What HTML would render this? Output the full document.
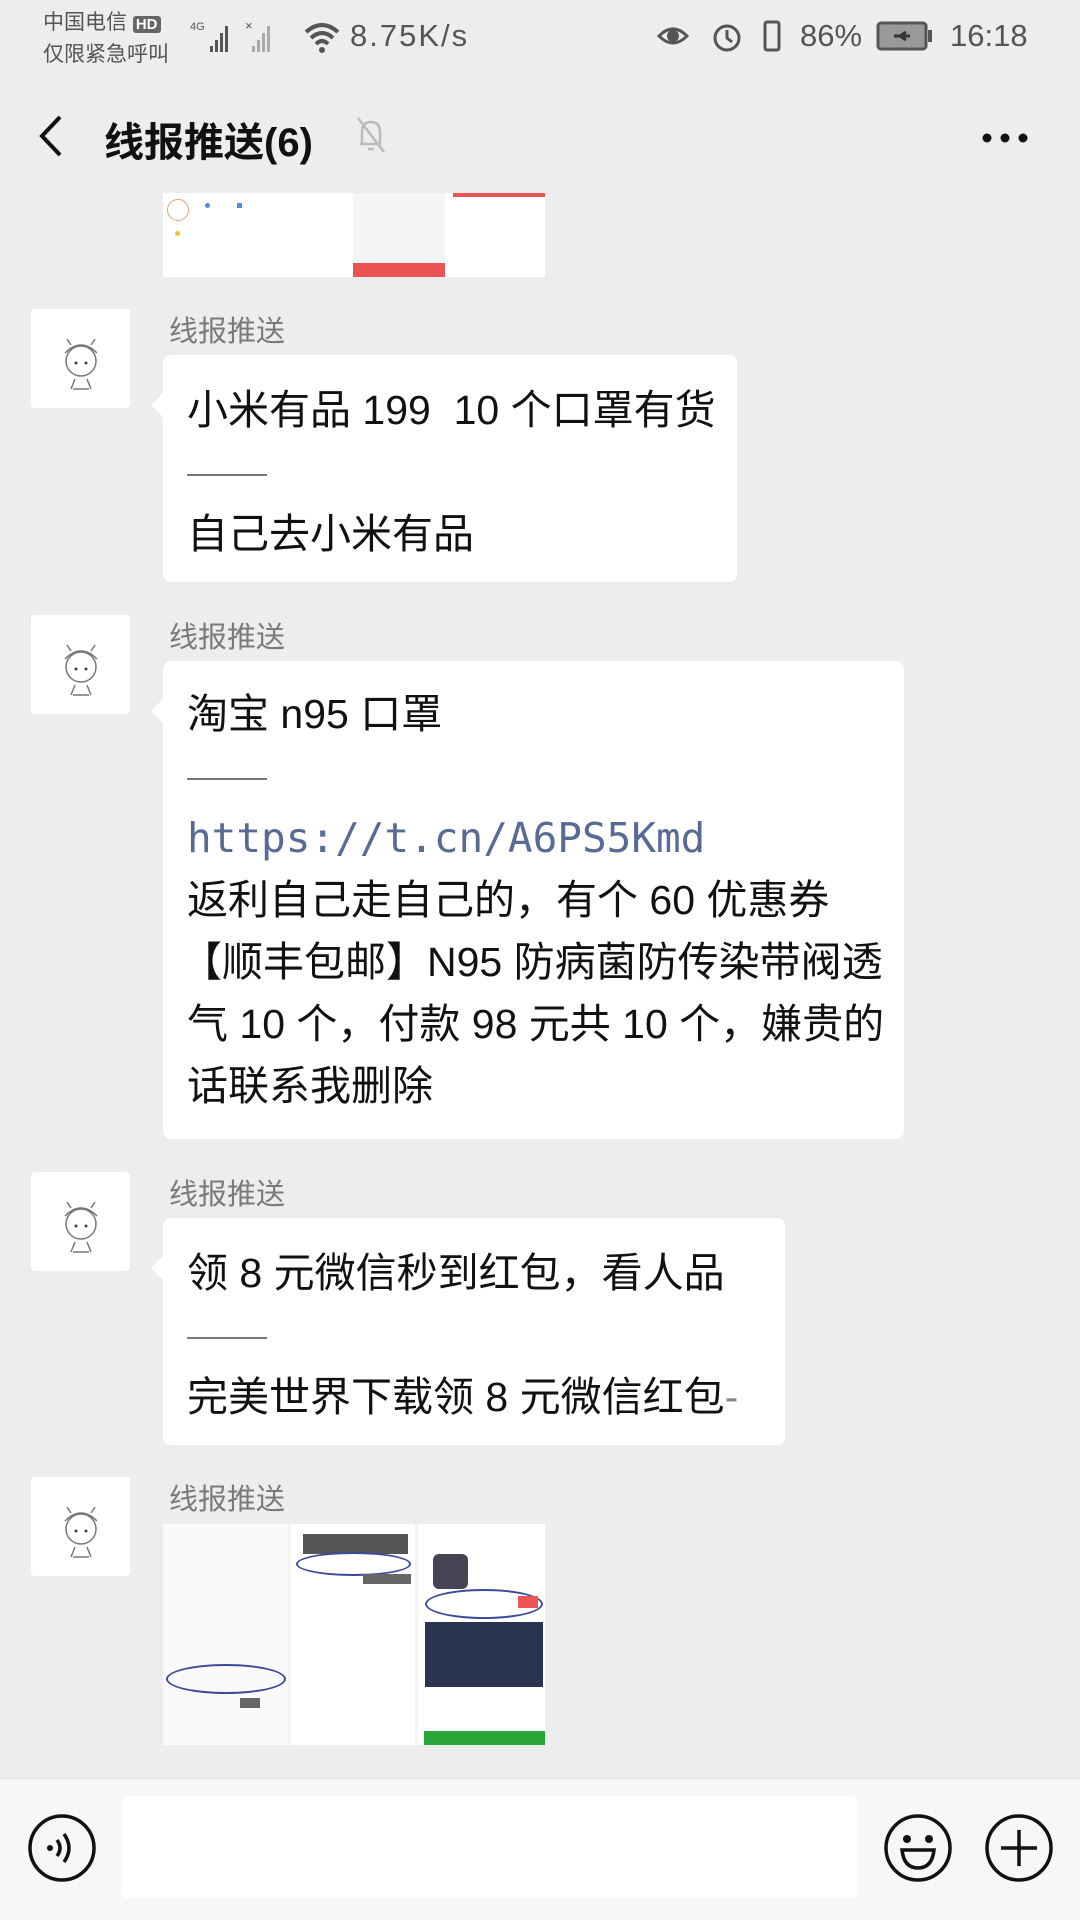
<!DOCTYPE html>
<html><head><meta charset="utf-8"><style>
*{margin:0;padding:0;box-sizing:border-box}
body{width:1080px;height:1920px;background:#ededed;position:relative;overflow:hidden;font-family:"Liberation Sans","Noto Sans CJK SC",sans-serif;color:#111}
.abs{position:absolute}
.av{position:absolute;left:31px;width:99px;height:99px;background:#fff;border-radius:4px}
.nm{position:absolute;left:169px;font-size:29px;color:#7a7a7a;line-height:34px}
.bub{position:absolute;left:163px;background:#fff;border-radius:8px;padding:0 24px;font-size:41px;line-height:62px;color:#111;white-space:nowrap}
.bub:before{content:"";position:absolute;left:-12px;top:38px;border:12px solid transparent;border-left:0;border-right-color:#fff}
.dash{display:inline-block;width:80px;height:2px;background:#777;vertical-align:middle}
</style></head><body>
<!-- status bar -->
<div class="abs" style="left:43px;top:8px;font-size:21px;color:#555;line-height:30px">中国电信 <span style="background:#666;color:#fff;font-size:15px;padding:0 3px;border-radius:3px;font-weight:bold">HD</span><br>仅限紧急呼叫</div>
<svg class="abs" style="left:190px;top:18px" width="100" height="36"><text x="0" y="12" font-size="11" fill="#555" font-family="Liberation Sans">4G</text><g fill="#555"><rect x="20" y="28" width="3" height="6"/><rect x="25" y="22" width="3" height="12"/><rect x="30" y="15" width="3" height="19"/><rect x="35" y="8" width="3" height="26"/></g><text x="55" y="12" font-size="13" fill="#555">×</text><g fill="#aaa"><rect x="62" y="28" width="3" height="6"/><rect x="67" y="22" width="3" height="12"/><rect x="72" y="15" width="3" height="19"/><rect x="77" y="8" width="3" height="26"/></g></svg>
<svg class="abs" style="left:302px;top:20px" width="40" height="34"><path d="M4 12 Q20 -2 36 12 M9 18 Q20 8 31 18 M14 24 Q20 18 26 24" stroke="#555" stroke-width="4" fill="none"/><circle cx="20" cy="30" r="3" fill="#555"/></svg>
<div class="abs" style="left:350px;top:18px;font-size:31px;color:#555;letter-spacing:2px">8.75K/s</div>
<svg class="abs" style="left:655px;top:18px" width="150" height="36"><path d="M4 18 Q18 4 32 18 Q18 32 4 18Z" stroke="#555" stroke-width="3" fill="none"/><circle cx="18" cy="18" r="6" fill="#555"/><circle cx="72" cy="20" r="12" stroke="#555" stroke-width="3" fill="none"/><path d="M72 12v8l5 4" stroke="#555" stroke-width="3" fill="none"/><rect x="110" y="4" width="14" height="28" rx="2" stroke="#555" stroke-width="3" fill="none"/></svg>
<div class="abs" style="left:800px;top:18px;font-size:31px;color:#555">86%</div>
<svg class="abs" style="left:876px;top:20px" width="60" height="32"><rect x="2" y="3" width="48" height="26" rx="3" stroke="#555" stroke-width="3" fill="#999"/><rect x="52" y="10" width="4" height="12" fill="#555"/><path d="M18 16h16M30 12l-6 4 6 4" stroke="#333" stroke-width="3" fill="none"/></svg>
<div class="abs" style="left:950px;top:18px;font-size:31px;color:#555">16:18</div>
<!-- title -->
<svg class="abs" style="left:36px;top:113px" width="30" height="46"><path d="M24 4 L6 23 L24 42" stroke="#111" stroke-width="4" fill="none"/></svg>
<div class="abs" style="left:104px;top:110px;font-size:40px;font-weight:bold;color:#111">线报推送(6)</div>
<svg class="abs" style="left:354px;top:114px" width="34" height="42"><path d="M8 30 V18 Q8 8 17 8 Q26 8 26 18 V30 H6 M14 35 H20 M4 4 L30 38" stroke="#bbb" stroke-width="2.5" fill="none"/></svg>
<div class="abs" style="left:982px;top:130px;width:46px;height:10px"><svg width="46" height="10"><circle cx="5" cy="5" r="4.5" fill="#111"/><circle cx="23" cy="5" r="4.5" fill="#111"/><circle cx="41" cy="5" r="4.5" fill="#111"/></svg></div>
<!-- first image -->
<div class="abs" style="left:163px;top:193px;width:382px;height:84px;background:#fff">
 <div class="abs" style="left:190px;top:0;width:92px;height:84px;background:#f5f5f5"></div>
 <div class="abs" style="left:190px;top:70px;width:92px;height:14px;background:#ea5453"></div>
 <div class="abs" style="left:290px;top:0;width:92px;height:4px;background:#ea5453"></div>
 <div class="abs" style="left:4px;top:6px;width:22px;height:22px;border:1px solid #e8a070;border-radius:50%"></div>
 <div class="abs" style="left:42px;top:10px;width:5px;height:5px;background:#4a90d9;border-radius:50%"></div>
 <div class="abs" style="left:74px;top:10px;width:5px;height:5px;background:#4a90d9"></div>
 <div class="abs" style="left:12px;top:38px;width:5px;height:5px;background:#f0c030;border-radius:50%"></div>
</div>
<!-- msg 1 -->
<div class="av" style="top:309px"><svg width="99" height="99"><g stroke="#777" stroke-width="1.5" fill="none"><circle cx="50" cy="52" r="15"/><path d="M34 44 Q50 28 66 44 M40 36 l-4 -6 M60 36 l4 -6 M44 70 l-4 10 M56 70 l4 10 M42 80 h16"/></g><circle cx="45" cy="54" r="1.5" fill="#444"/><circle cx="55" cy="54" r="1.5" fill="#444"/></svg></div>
<div class="nm" style="top:315px">线报推送</div>
<div class="bub" style="top:355px;width:574px;height:227px;padding-top:24px">小米有品 199&nbsp; 10 个口罩有货<br><span class="dash"></span><br>自己去小米有品</div>
<!-- msg 2 -->
<div class="av" style="top:615px"><svg width="99" height="99"><g stroke="#777" stroke-width="1.5" fill="none"><circle cx="50" cy="52" r="15"/><path d="M34 44 Q50 28 66 44 M40 36 l-4 -6 M60 36 l4 -6 M44 70 l-4 10 M56 70 l4 10 M42 80 h16"/></g><circle cx="45" cy="54" r="1.5" fill="#444"/><circle cx="55" cy="54" r="1.5" fill="#444"/></svg></div>
<div class="nm" style="top:621px">线报推送</div>
<div class="bub" style="top:661px;width:741px;height:478px;padding-top:22px">淘宝 n95 口罩<br><span class="dash"></span><br><span style="color:#576b95;font-family:'DejaVu Sans Mono','Liberation Mono',monospace;font-size:41px">https://t.cn/A6PS5Kmd</span><br>返利自己走自己的，有个 60 优惠券<br><span style="margin-left:-6px">【顺丰包邮】N95 防病菌防传染带阀透</span><br>气 10 个，付款 98 元共 10 个，嫌贵的<br>话联系我删除</div>
<!-- msg 3 -->
<div class="av" style="top:1172px"><svg width="99" height="99"><g stroke="#777" stroke-width="1.5" fill="none"><circle cx="50" cy="52" r="15"/><path d="M34 44 Q50 28 66 44 M40 36 l-4 -6 M60 36 l4 -6 M44 70 l-4 10 M56 70 l4 10 M42 80 h16"/></g><circle cx="45" cy="54" r="1.5" fill="#444"/><circle cx="55" cy="54" r="1.5" fill="#444"/></svg></div>
<div class="nm" style="top:1178px">线报推送</div>
<div class="bub" style="top:1218px;width:622px;height:227px;padding-top:24px">领 8 元微信秒到红包，看人品<br><span class="dash"></span><br>完美世界下载领 8 元微信红包<span style="color:#888">-</span></div>
<!-- msg 4 -->
<div class="av" style="top:1477px"><svg width="99" height="99"><g stroke="#777" stroke-width="1.5" fill="none"><circle cx="50" cy="52" r="15"/><path d="M34 44 Q50 28 66 44 M40 36 l-4 -6 M60 36 l4 -6 M44 70 l-4 10 M56 70 l4 10 M42 80 h16"/></g><circle cx="45" cy="54" r="1.5" fill="#444"/><circle cx="55" cy="54" r="1.5" fill="#444"/></svg></div>
<div class="nm" style="top:1483px">线报推送</div>
<div class="abs" style="left:163px;top:1524px;width:382px;height:221px;background:#f4f4f4;overflow:hidden">
 <div class="abs" style="left:0;top:0;width:125px;height:221px;background:#fafafa"></div>
 <div class="abs" style="left:128px;top:0;width:124px;height:221px;background:#fff"></div>
 <div class="abs" style="left:255px;top:0;width:127px;height:221px;background:#fff"></div>
 <div class="abs" style="left:140px;top:10px;width:105px;height:20px;background:#555"></div>
 <div class="abs" style="left:133px;top:28px;width:115px;height:24px;border:2px solid #3a4a9a;border-radius:50%"></div>
 <div class="abs" style="left:3px;top:140px;width:120px;height:30px;border:2px solid #3a4a9a;border-radius:50%"></div>
 <div class="abs" style="left:270px;top:30px;width:35px;height:35px;background:#445;border-radius:6px"></div>
 <div class="abs" style="left:262px;top:65px;width:118px;height:30px;border:2px solid #3a4a9a;border-radius:50%"></div>
 <div class="abs" style="left:355px;top:72px;width:20px;height:12px;background:#e55"></div>
 <div class="abs" style="left:262px;top:98px;width:118px;height:65px;background:#2a3450"></div>
 <div class="abs" style="left:261px;top:207px;width:121px;height:14px;background:#2aa53a"></div>
 <div class="abs" style="left:200px;top:50px;width:48px;height:10px;background:#666"></div>
 <div class="abs" style="left:77px;top:174px;width:20px;height:10px;background:#666"></div>
</div>
<!-- bottom bar -->
<div class="abs" style="left:0;top:1778px;width:1080px;height:142px;background:#f7f7f7;border-top:1px solid #e2e2e2"></div>
<div class="abs" style="left:122px;top:1796px;width:735px;height:102px;background:#fff;border-radius:6px"></div>
<svg class="abs" style="left:26px;top:1812px" width="72" height="72"><circle cx="36" cy="36" r="32" stroke="#111" stroke-width="3.5" fill="none"/><circle cx="24" cy="36" r="3" fill="#111"/><path d="M31 28 Q37 36 31 44 M38 22 Q48 36 38 50" stroke="#111" stroke-width="3.5" fill="none"/></svg>
<svg class="abs" style="left:882px;top:1812px" width="72" height="72"><circle cx="36" cy="36" r="32" stroke="#111" stroke-width="3.5" fill="none"/><circle cx="25" cy="27" r="4" fill="#111"/><circle cx="47" cy="27" r="4" fill="#111"/><path d="M20 38 H52 Q50 56 36 56 Q22 56 20 38Z" stroke="#111" stroke-width="3.5" fill="none"/></svg>
<svg class="abs" style="left:983px;top:1812px" width="72" height="72"><circle cx="36" cy="36" r="32" stroke="#111" stroke-width="3.5" fill="none"/><path d="M36 18 V54 M18 36 H54" stroke="#111" stroke-width="3.5"/></svg>
</body></html>
